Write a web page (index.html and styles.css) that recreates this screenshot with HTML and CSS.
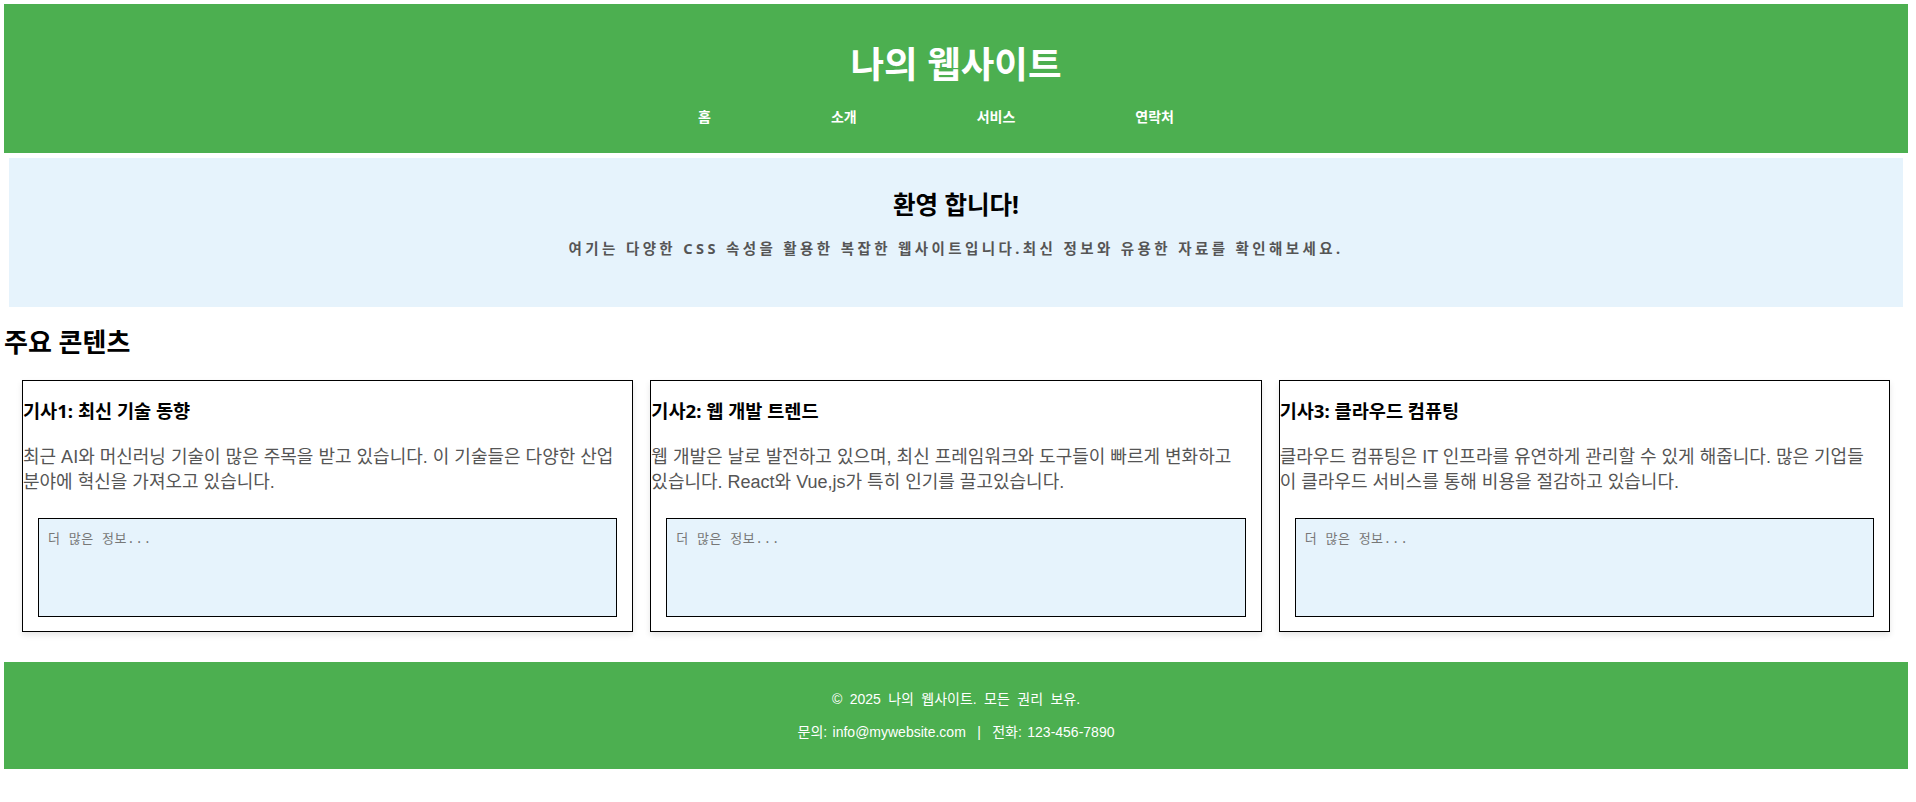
FILE: index.html
```html
<!DOCTYPE html>
<html lang="ko">
<head>
<meta charset="utf-8">
<title>나의 웹사이트</title>
<link rel="stylesheet" href="styles.css">
</head>
<body>
<header class="site-header">
  <h1 class="site-title">나의 웹사이트</h1>
  <nav>
    <ul class="nav-list">
      <li><a href="#">홈</a></li>
      <li><a href="#">소개</a></li>
      <li><a href="#">서비스</a></li>
      <li><a href="#">연락처</a></li>
    </ul>
  </nav>
</header>

<section class="hero">
  <h2 class="hero-title">환영 합니다!</h2>
  <p class="hero-text">여기는 다양한 CSS 속성을 활용한 복잡한 웹사이트입니다.최신 정보와 유용한 자료를 확인해보세요.</p>
</section>

<main>
  <h2 class="section-title">주요 콘텐츠</h2>
  <div class="cards">
    <article class="card">
      <h3 class="card-title">기사1: 최신 기술 동향</h3>
      <p class="card-text">최근 AI와 머신러닝 기술이 많은 주목을 받고 있습니다. 이 기술들은 다양한 산업<br>분야에 혁신을 가져오고 있습니다.</p>
      <textarea class="card-input" placeholder="더 많은 정보..."></textarea>
    </article>
    <article class="card">
      <h3 class="card-title">기사2: 웹 개발 트렌드</h3>
      <p class="card-text">웹 개발은 날로 발전하고 있으며, 최신 프레임워크와 도구들이 빠르게 변화하고<br>있습니다. React와 Vue,js가 특히 인기를 끌고있습니다.</p>
      <textarea class="card-input" placeholder="더 많은 정보..."></textarea>
    </article>
    <article class="card">
      <h3 class="card-title">기사3: 클라우드 컴퓨팅</h3>
      <p class="card-text">클라우드 컴퓨팅은 IT 인프라를 유연하게 관리할 수 있게 해줍니다. 많은 기업들<br>이 클라우드 서비스를 통해 비용을 절감하고 있습니다.</p>
      <textarea class="card-input" placeholder="더 많은 정보..."></textarea>
    </article>
  </div>
</main>

<footer class="site-footer">
  <p class="copyright">© 2025 나의 웹사이트. 모든 권리 보유.</p>
  <p>문의: info@mywebsite.com <span class="sep">|</span> 전화: 123-456-7890</p>
</footer>
</body>
</html>
```

FILE: styles.css
```css
body {
  margin: 4px 8px 0 4px;
  font-family: "Noto Sans", "Noto Sans CJK KR", sans-serif;
  color: #000;
  background: #fff;
}

.site-header {
  background: #4caf50;
  color: #fff;
  text-align: center;
  padding: 36px 0 27px;
}

.site-title {
  margin: 0;
  font-size: 36.5px;
  line-height: 49px;
  font-weight: 700;
}

.nav-list {
  list-style: none;
  margin: 18px 0 0;
  padding: 0 40px 0 0;
  display: flex;
  justify-content: center;
  gap: 120px;
  font-size: 14px;
  line-height: 19px;
  font-weight: 700;
}

.nav-list a {
  color: #fff;
  text-decoration: none;
}

.hero {
  margin: 5px 5px 0;
  background: #e6f3fc;
  text-align: center;
  padding: 30px 20px 49px;
}

.hero-title {
  margin: 0 0 17px;
  font-size: 24.5px;
  line-height: 33px;
  font-weight: 700;
}

.hero-text {
  margin: 0;
  font-size: 14.5px;
  line-height: 20px;
  font-weight: 700;
  letter-spacing: 3.4px;
  color: #555;
}

.section-title {
  margin: 18px 0 20px;
  font-size: 26px;
  line-height: 35px;
  font-weight: 700;
}

.cards {
  display: flex;
  gap: 17px;
  padding: 0 18px;
}

.card {
  flex: 1 1 0;
  min-width: 0;
  border: 1px solid #000;
  background: #fff;
  box-shadow: 0 3px 6px rgba(0, 0, 0, 0.1);
}

.card-title {
  margin: 17px 0 21px;
  font-size: 18.6px;
  line-height: 26px;
  font-weight: 700;
}

.card-text {
  margin: 0;
  font-family: "Liberation Sans", "Noto Sans CJK KR", sans-serif;
  font-size: 18px;
  line-height: 24.5px;
  color: #555;
}

.card-input {
  display: block;
  box-sizing: border-box;
  width: calc(100% - 30px);
  height: 99px;
  margin: 24px 15px 14px;
  padding: 9px 9px;
  border: 1px solid #000;
  background: #e6f3fc;
  font-family: "Liberation Mono", "Noto Sans CJK KR", monospace;
  font-size: 13px;
  letter-spacing: 0.5px;
  resize: none;
}

.card-input::placeholder {
  color: #777;
}

.site-footer {
  margin-top: 30px;
  background: #4caf50;
  color: #fff;
  text-align: center;
  padding: 27px 0;
  font-family: "Liberation Sans", "Noto Sans CJK KR", sans-serif;
  font-size: 14px;
  word-spacing: 1.5px;
}

.site-footer p {
  margin: 0;
  line-height: 20px;
}

.site-footer p + p {
  margin-top: 13px;
}

.site-footer .copyright {
  word-spacing: 3.5px;
}

.sep {
  margin: 0 6px;
}
```
